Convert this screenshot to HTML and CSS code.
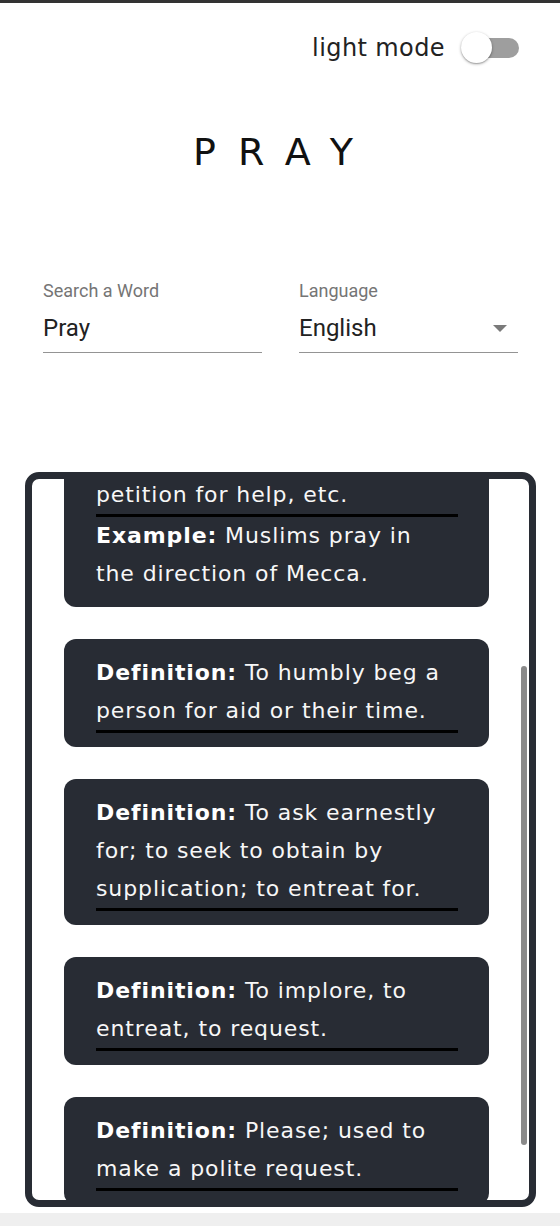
FILE: index.html
```html
<!DOCTYPE html>
<html lang="en">
<head>
<meta charset="utf-8">
<title>Pray</title>
<link rel="stylesheet" href="styles.css">
</head>
<body>
<div class="app">
  <header class="topbar">
    <span class="mode-label">light mode</span>
    <span class="switch" role="switch" aria-checked="false">
      <span class="switch-track"></span>
      <span class="switch-knob"></span>
    </span>
  </header>

  <h1 class="title">PRAY</h1>

  <form class="search">
    <label class="field">
      <span class="field-label">Search a Word</span>
      <span class="field-input"><span class="field-value">Pray</span></span>
    </label>
    <label class="field">
      <span class="field-label">Language</span>
      <span class="field-input select">
        <span class="field-value">English</span>
        <svg class="arrow" width="14" height="7" viewBox="0 0 14 7"><polygon points="0,0 14,0 7,7" fill="#7a7a7a"/></svg>
      </span>
    </label>
  </form>

  <section class="panel">
    <div class="scroller">
      <div class="card">
        <p class="def"><b>Definition:</b> To make a devout request to God or to an object of worship; to speak words of adoration, thanks, confession, or<br>petition for help, etc.</p>
        <p class="example"><b>Example:</b> Muslims pray in the direction of Mecca.</p>
      </div>
      <div class="card">
        <p class="def"><b>Definition:</b> To humbly beg a person for aid or their time.</p>
      </div>
      <div class="card">
        <p class="def"><b>Definition:</b> To ask earnestly for; to seek to obtain by supplication; to entreat for.</p>
      </div>
      <div class="card">
        <p class="def"><b>Definition:</b> To implore, to entreat, to request.</p>
      </div>
      <div class="card">
        <p class="def"><b>Definition:</b> Please; used to make a polite request.</p>
      </div>
    </div>
    <div class="track"><div class="thumb" style="margin-top:187px;height:479px"></div></div>
  </section>
</div>
<div class="footer-band"></div>
<script src="script.js"></script>
</body>
</html>
```

FILE: styles.css
```css
* { box-sizing: border-box; }

html, body {
  margin: 0;
  padding: 0;
  background: #fff;
}

body {
  border-top: 3px solid #333;
  font-family: "DejaVu Sans", "Open Sans", sans-serif;
  color: #222;
}

.app {
  display: flex;
  flex-direction: column;
}

/* top bar */
.topbar {
  display: flex;
  justify-content: flex-end;
  align-items: center;
  gap: 16px;
  padding: 29px 41px 0 0;
  height: 61px;
}

.mode-label {
  font-size: 24px;
  letter-spacing: 0.4px;
  color: #222;
  line-height: 32px;
}

.switch {
  position: relative;
  display: block;
  width: 58px;
  height: 32px;
}

.switch-track {
  display: block;
  margin: 6px 0 0 1px;
  width: 57px;
  height: 20px;
  border-radius: 10px;
  background: #9e9e9e;
}

.switch-knob {
  position: absolute;
  left: 0;
  top: 0;
  width: 31px;
  height: 31px;
  border-radius: 50%;
  background: #fff;
  box-shadow: 0 1px 3px rgba(0,0,0,0.35), 0 1px 1px rgba(0,0,0,0.14);
}

/* title */
.title {
  margin: 64px 0 0;
  text-align: center;
  font-size: 38px;
  line-height: 48px;
  font-weight: 400;
  letter-spacing: 22px;
  padding-left: 8px;
  color: #111;
}

/* search form */
.search {
  display: grid;
  grid-template-columns: 219px 219px;
  column-gap: 37px;
  padding: 0 42px 0 43px;
  margin-top: 104px;
  font-family: Roboto, "Liberation Sans", sans-serif;
}

.field {
  display: flex;
  flex-direction: column;
}

.field-label {
  font-size: 18px;
  line-height: 21px;
  color: #757575;
}

.field-input {
  margin-top: 13px;
  display: flex;
  align-items: center;
  justify-content: space-between;
  padding-bottom: 10px;
  border-bottom: 1px solid #949494;
}

.field-value {
  font-size: 24px;
  line-height: 28px;
  color: #222;
}

.arrow {
  margin-right: 11px;
  margin-top: 1px;
}

/* results panel */
.panel {
  margin: 119px 24px 0 25px;
  height: 735px;
  border: 7px solid #282c34;
  border-radius: 14px;
  overflow: hidden;
  display: flex;
  background: #fff;
}

.scroller {
  position: relative;
  flex: 1;
  overflow: hidden;
  padding: 32px 0 80px;
}

.track {
  width: 8px;
  padding-right: 2px;
  display: flex;
  flex-direction: column;
}

.thumb {
  width: 6px;
  border-radius: 3px;
  background: #8a8a8a;
}

.card {
  margin: 0 32px 32px;
  padding: 15px 31px 14px 32px;
  border-radius: 12px;
  background: #282c34;
  color: #f7f7f7;
  font-size: 22px;
  line-height: 38px;
  letter-spacing: 0.9px;
}

.card p {
  margin: 0;
}

.card b {
  color: #fff;
  font-weight: 700;
}

.def {
  border-bottom: 3px solid #000;
}

.footer-band {
  margin-top: 6px;
  height: 13px;
  background: #efefef;
}
```

FILE: script.js
```js
(function () {
  var scroller = document.querySelector('.scroller');
  var cards = document.querySelectorAll('.card');
  if (scroller && cards.length > 1) {
    scroller.scrollTop = cards[1].offsetTop - 160;
  }
})();
```
